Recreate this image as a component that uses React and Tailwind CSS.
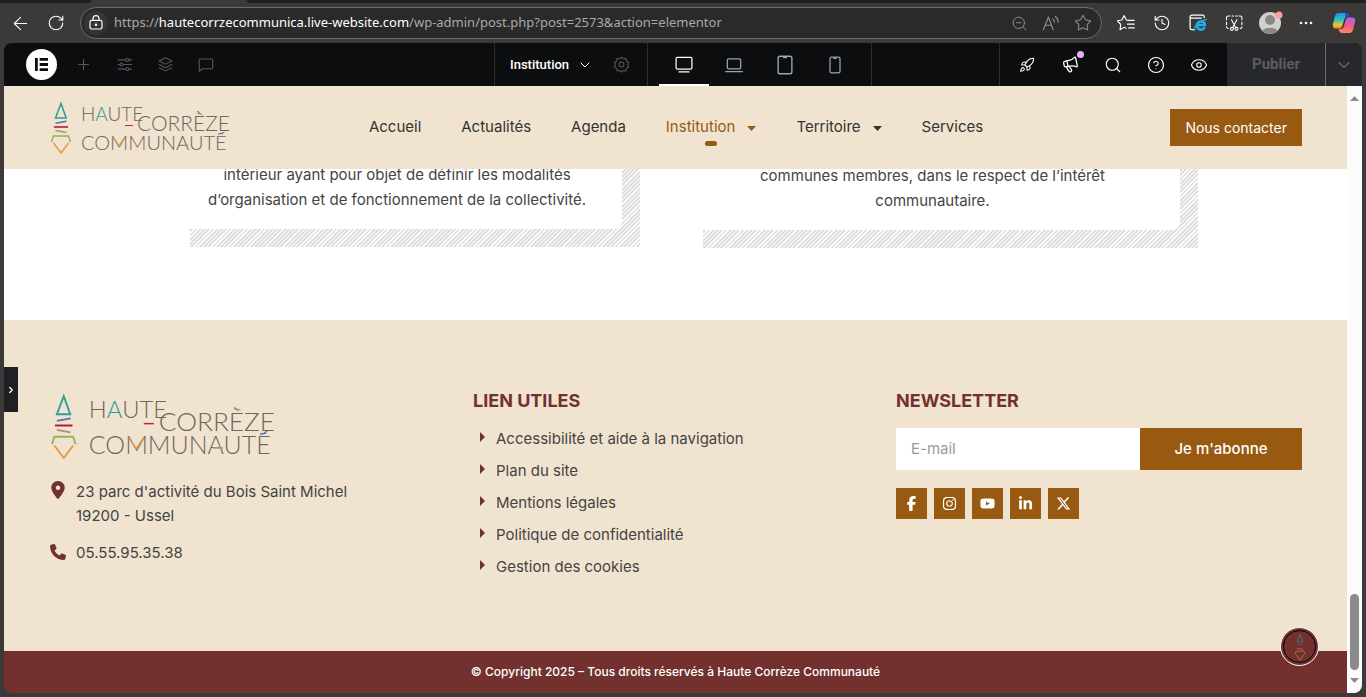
import React from "react";
import { ArrowLeft, RotateCw, ZoomOut, Star, Plus, ChevronDown, Rocket, Search, Eye, CircleQuestionMark, ChevronRight, History, Megaphone } from "lucide-react";
import { FaFacebookF, FaInstagram, FaYoutube, FaLinkedinIn, FaPhone, FaLocationDot, FaXTwitter } from "react-icons/fa6";

const site = "font-['Inter','Liberation_Sans',sans-serif]";

function Svg({ children, size = 18, className = "", ...rest }) {
  return (
    <svg width={size} height={size} viewBox="0 0 24 24" fill="none" stroke="currentColor" strokeWidth="1.5" strokeLinecap="round" strokeLinejoin="round" className={className} aria-hidden="true" {...rest}>
      {children}
    </svg>
  );
}

function Totem() {
  return (
    <g fill="none" strokeWidth="1.5">
      <path d="M11 2.500L16.200 17H5.500Z" stroke="#2f9c95" />
      <path d="M5.500 22.300L16.500 20.300" stroke="#4f72b8" />
      <path d="M4 26H18" stroke="#b5121b" />
      <path d="M5.500 29.500L16.500 31.500" stroke="#b98c7d" />
      <path d="M1.500 41L3.500 35H18.500L20.500 41" stroke="#93b552" />
      <path d="M3.500 42L11 52L18.500 42" stroke="#e39a4a" />
    </g>
  );
}

function Logo({ className }) {
  return (
    <svg viewBox="0 0 180 54" className={className} role="img" aria-label="Haute Corrèze Communauté">
      <Totem />
      <g fill="#6f675e" fontFamily="Lato, sans-serif" fontWeight="300">
        <text x="31" y="20" fontSize="19">H<tspan fill="#2f9c95">A</tspan>UTE</text>
        <text x="87" y="30" fontSize="21">CORRÈZE</text>
        <text x="31" y="49" fontSize="20">COMMUNAUTÉ</text>
      </g>
      <g fill="none" strokeWidth="1.200">
        <path d="M75 24.500H83" stroke="#c0272d" />
        <path d="M62.800 35.500L69 44.500L75 35.500" stroke="#e39a4a" />
        <path d="M130.500 44H138.500" stroke="#93b552" />
        <path d="M147 12.500L152.500 13.500" stroke="#b98c7d" />
        <path d="M168 33L173 32" stroke="#4f72b8" />
      </g>
    </svg>
  );
}

function BrowserBar() {
  const ico = "flex size-7 items-center justify-center";
  return (
    <header className="bg-[#3b3a39] text-white">
      <div className="flex h-[3px]">
        <div className="w-[91px] rounded-br bg-[#202020]" />
        <div className="w-[156px]" />
        <div className="flex-1 rounded-bl bg-[#202020]" />
      </div>
      <div className="flex h-10 items-center pr-2 pl-1.5">
        <button className={ico} aria-label="Retour"><ArrowLeft size={21} strokeWidth={1.3} /></button>
        <button className={ico + " ml-2"} aria-label="Actualiser"><RotateCw size={18} strokeWidth={1.5} /></button>
        <div className="ml-2.5 flex h-8 flex-1 items-center rounded-full border border-[#6b6b6b] bg-[#2a2a2a] pr-1 pl-[3px]">
          <button className="flex size-6 items-center justify-center rounded-full bg-[#353535]" aria-label="Informations sur le site">
            <Svg size={16} strokeWidth="1.800"><rect x="3" y="8" width="18" height="13" rx="2.500" /><path d="M7.500 8V5.500a4.500 4.500 0 0 1 9 0V8" /><circle cx="12" cy="14.500" r="1" fill="currentColor" /></Svg>
          </button>
          <div role="textbox" aria-label="Adresse" className="ml-1.5 flex-1 truncate font-['Noto_Sans',sans-serif] text-[13px] text-[#a9a9a9]">
            https://<span className="text-white">hautecorrzecommunica.live-website.com</span>/wp-admin/post.php?post=2573&amp;action=elementor
          </div>
          <div className="flex items-center gap-1 text-[#8f8f8f]">
            <button className={ico} aria-label="Zoom arrière"><ZoomOut size={17} strokeWidth={1.4} /></button>
            <button className={ico} aria-label="Lecture à voix haute">
              <Svg size={18}><path d="M2 21L8.500 4L15 21M4.500 15H12.500M14.500 6.500q2 1.500 2 4.500M17.500 3q4 3 4 8" /></Svg>
            </button>
            <button className={ico} aria-label="Ajouter aux favoris"><Star size={18} strokeWidth={1.4} /></button>
          </div>
        </div>
        <div className="ml-2.5 flex items-center gap-2">
          <button className={ico} aria-label="Favoris">
            <Svg size={18}><path d="M15 8.500L12.500 8L9.500 2L6.500 8L0.500 9L5 14L4 21L9.500 17.500L12 19M15.500 8.500H23M14 13.500H23M15.500 18.500H23" /></Svg>
          </button>
          <button className={ico} aria-label="Historique"><History size={18} strokeWidth={1.5} /></button>
          <button className={ico} aria-label="Mode Internet Explorer">
            <Svg size={20}>
              <path d="M8 20H4.500a2 2 0 0 1-2-2V4.500a2 2 0 0 1 2-2h13a2 2 0 0 1 2 2v1M3 6H16" />
              <path d="M10.500 14.500H20.500a5 5 0 1 0-1 3.500" stroke="#1fb0ea" strokeWidth="3" />
              <path d="M8 21c-2-3 5-12 14-13" stroke="#1fb0ea" strokeWidth="1.500" />
            </Svg>
          </button>
          <button className={ico} aria-label="Capture d'écran">
            <Svg size={20} strokeWidth="1.300">
              <path d="M3 8V5.500a2 2 0 0 1 2-2H7M9.500 3.500h2M14 3.500h2M18 3.500h1.500a2 2 0 0 1 2 2V8M21.500 11v3M3 11v3M3 16.500a2 2 0 0 0 2 2M21.500 16.500a2 2 0 0 1-2 2" />
              <path d="M9 8L14 17.500M15.500 8L10.500 17.500" /><circle cx="9.500" cy="19" r="1.800" /><circle cx="15" cy="19" r="1.800" />
            </Svg>
          </button>
          <button className={ico} aria-label="Profil">
            <svg width="26" height="26" viewBox="0 0 26 26" aria-hidden="true">
              <circle cx="13" cy="13" r="11" fill="#d2d0ce" /><circle cx="13" cy="10" r="5" fill="#8a8886" />
              <path d="M5.500 21a8 5 0 0 1 15 0a11 11 0 0 1-15 0Z" fill="#8a8886" />
              <circle cx="22" cy="5" r="3.500" fill="#f7a19b" />
            </svg>
          </button>
          <button className={ico} aria-label="Paramètres et plus">
            <svg width="14" height="4" viewBox="0 0 14 4" fill="currentColor" aria-hidden="true"><circle cx="2" cy="2" r="1.300" /><circle cx="7" cy="2" r="1.300" /><circle cx="12" cy="2" r="1.300" /></svg>
          </button>
          <button className={ico + " ml-0.5"} aria-label="Copilot">
            <svg width="24" height="22" viewBox="0 0 24 22" aria-hidden="true">
              <defs>
                <linearGradient id="cpa" x1="0" y1="0" x2="0" y2="1"><stop offset="0" stopColor="#1d8ff0" /><stop offset=".45" stopColor="#2fc3c0" /><stop offset=".75" stopColor="#e8c92c" /><stop offset="1" stopColor="#f5843a" /></linearGradient>
                <linearGradient id="cpb" x1="0" y1="0" x2="0" y2="1"><stop offset="0" stopColor="#b065e8" /><stop offset=".5" stopColor="#f0568c" /><stop offset="1" stopColor="#fb8a52" /></linearGradient>
              </defs>
              <path d="M6 1h8q2.500 0 3 2.500L17.500 5H15q-2 0-2.600 2L10 14.500q-.6 2-3 2H4Q0 16.500 1 12L3 4Q3.800 1 6 1Z" fill="url(#cpa)" />
              <path d="M18 21H10q-2.500 0-3-2.500L6.500 17H9q2 0 2.600-2L14 7.500q.6-2 3-2h3Q24 5.500 23 10L21 18Q20.200 21 18 21Z" fill="url(#cpb)" />
              <path d="M13.500 1Q16.500 1 17 3.500L17.500 5H15q-1.500 0-2 1.500Z" fill="#2848c8" />
            </svg>
          </button>
        </div>
      </div>
    </header>
  );
}

function EditorBar() {
  const tool = "flex size-7 items-center justify-center";
  return (
    <div className={"flex h-[43px] shrink-0 overflow-hidden rounded-t-lg bg-[#0c0d0e] text-white " + site}>
      <div className="flex flex-1 items-center gap-3 pl-[22px]">
        <button className="flex size-[31px] items-center justify-center rounded-full bg-white" aria-label="Elementor">
          <svg width="13" height="13" viewBox="0 0 14 14" fill="#0c0d0e" aria-hidden="true"><path d="M0 0h3v14H0zM5 0h9v3H5zM5 5.500h9v3H5zM5 11h9v3H5z" /></svg>
        </button>
        <div className="flex gap-[13px] text-[#55585c]">
          <button className={tool} aria-label="Ajouter un élément"><Plus size={17} strokeWidth={1.5} /></button>
          <button className={tool} aria-label="Réglages du site"><Svg size={17}><path d="M3 5.500h11M18.500 5.500H22M3 12h2.500M10 12h12M3 18.500h11M18.500 18.500H22" /><circle cx="16.200" cy="5.500" r="2.200" /><circle cx="7.800" cy="12" r="2.200" /><circle cx="16.200" cy="18.500" r="2.200" /></Svg></button>
          <button className={tool} aria-label="Structure"><Svg size={17}><path d="M12 2.500L21 7L12 11.500L3 7ZM3 12L12 16.500L21 12M3 16.500L12 21L21 16.500" /></Svg></button>
          <button className={tool} aria-label="Notes"><Svg size={18}><path d="M3 20.500V6a2 2 0 0 1 2-2h14a2 2 0 0 1 2 2v9a2 2 0 0 1-2 2H7Z" /></Svg></button>
        </div>
      </div>
      <div className="flex w-[154px] items-center justify-between border-x border-[#2b2d30] pr-3 pl-[15px]">
        <button className="flex items-center gap-2 font-['Roboto',sans-serif] text-[13px] font-medium">Institution <ChevronDown size={16} strokeWidth={1.5} /></button>
        <button className={tool + " text-[#55585c]"} aria-label="Réglages de la page">
          <Svg size={17}><circle cx="12" cy="12" r="3.500" /><path d="M12 1.800L14.800 4L18.300 3.600L19 7.200L22 9.200L20.600 12.500L22 15.800L18.800 17.500L18 21L14.500 20.600L12 22.800L9.500 20.600L6 21L5.200 17.500L2 15.800L3.400 12.500L2 9.200L5 7.200L5.700 3.600L9.200 4Z" /></Svg>
        </button>
      </div>
      <div className="flex w-[224px] border-r border-[#2b2d30] pl-[11px] text-[#9da5ae]">
        <button className="flex w-[50px] items-center justify-center border-b-2 border-white text-white" aria-label="Ordinateur"><Svg size={20}><rect x="2.500" y="4" width="19" height="14" rx="1.500" /><path d="M6 21.500h12" /></Svg></button>
        <button className="flex w-[50px] items-center justify-center" aria-label="Portable"><Svg size={20}><rect x="4" y="4.500" width="16" height="12" rx="1.500" /><path d="M2 20h20" /></Svg></button>
        <button className="flex w-[51px] items-center justify-center" aria-label="Tablette"><Svg size={22}><rect x="4.500" y="2.500" width="15" height="19" rx="2" /><path d="M10.500 4h3" /></Svg></button>
        <button className="flex w-[50px] items-center justify-center" aria-label="Mobile"><Svg size={20}><rect x="6" y="2.500" width="12" height="19" rx="2" /><path d="M10.500 4h3" /></Svg></button>
      </div>
      <div className="w-[127px]" />
      <div className="flex w-[228px] items-center gap-[15px] border-l border-[#2b2d30] pl-[13px]">
        <button className={tool} aria-label="Nouveautés"><Rocket size={16} strokeWidth={1.6} /></button>
        <button className={tool + " relative"} aria-label="Annonces">
          <Megaphone size={17} strokeWidth={1.8} className="-rotate-12" />
          <span className="absolute top-0 right-0 size-[7px] rounded-full bg-[#f0abfc]" />
        </button>
        <button className={tool} aria-label="Rechercher"><Search size={18} strokeWidth={1.5} /></button>
        <button className={tool} aria-label="Aide"><CircleQuestionMark size={18} strokeWidth={1.6} /></button>
        <button className={tool} aria-label="Aperçu"><Eye size={18} strokeWidth={1.5} /></button>
      </div>
      <button className="w-[98px] bg-[#26282b] font-['Roboto',sans-serif] text-[15px] font-bold text-[#5b5d60]">Publier</button>
      <button className="flex w-[37px] items-center justify-center border-l border-[#6a6c6f] bg-[#26282b] text-[#6a6c6f]" aria-label="Options de publication"><ChevronDown size={20} strokeWidth={1.3} /></button>
    </div>
  );
}

const nav = [["Accueil"], ["Actualités"], ["Agenda"], ["Institution", true, true], ["Territoire", true], ["Services"]];

function SiteHeader() {
  return (
    <header className="grid h-[83px] shrink-0 grid-cols-[1fr_auto_1fr] items-center bg-[#f0e3cf] pr-[45px] pl-[46px]">
      <a href="#accueil"><Logo className="w-[180px]" /></a>
      <nav className="flex gap-10 pb-0.5 text-[15px] leading-5 text-[#333]">
        {nav.map(([label, sub, active]) => (
          <a key={label} href={"#" + label} className={active ? "relative flex items-center gap-3 text-[#985a10]" : "flex items-center gap-3"}>
            {label}
            {sub && <svg width="9" height="5" viewBox="0 0 9 5" fill="currentColor" className="mt-1" aria-hidden="true"><path d="M0 0h9L4.500 5Z" /></svg>}
            {active && <span className="absolute top-6 left-1/2 h-[5px] w-3 -translate-x-1/2 rounded-sm bg-[#985a10]" />}
          </a>
        ))}
      </nav>
      <a href="#contact" className="justify-self-end bg-[#985a10] px-[15px] py-2 text-[14px] leading-[21px] text-white">Nous contacter</a>
    </header>
  );
}

const hatch = "bg-[repeating-linear-gradient(135deg,#e0e0e0_0px,#e0e0e0_2px,#ffffff_2px,#ffffff_3px)]";

function Cards() {
  return (
    <main className="flex h-[151px] shrink-0 items-start justify-center gap-[63px] overflow-hidden bg-white pl-[37px] text-center text-[15px] leading-[25px] text-[#444]">
      <article className={"-mt-[7px] w-[450px] pr-[18px] pb-[18px] " + hatch}>
        <p className="h-[67px] rounded-br-lg bg-white pr-[18px]">intérieur ayant pour objet de définir les modalités<br />d’organisation et de fonctionnement de la collectivité.</p>
      </article>
      <article className={"-mt-1.5 w-[495px] pr-[18px] pb-[18px] " + hatch}>
        <p className="h-[67px] rounded-br-lg bg-white pr-[18px]">communes membres, dans le respect de l’intérêt<br />communautaire.</p>
      </article>
    </main>
  );
}

const links = ["Accessibilité et aide à la navigation", "Plan du site", "Mentions légales", "Politique de confidentialité", "Gestion des cookies"];
const socials = [["Facebook", FaFacebookF], ["Instagram", FaInstagram], ["YouTube", FaYoutube], ["LinkedIn", FaLinkedinIn], ["X", FaXTwitter]];

function Footer() {
  return (
    <footer className="flex flex-1 flex-col text-[15px] text-[#444]">
      <div className="grid flex-1 grid-cols-3 gap-[17px] bg-[#f0e3cf] pt-[70px] pr-[45px] pb-8 pl-[46px]">
        <section>
          <Logo className="mt-[3px] w-[225px]" />
          <address className="mt-[19px] flex flex-col gap-[13px] leading-6 not-italic">
            <p className="flex gap-2.5"><FaLocationDot className="mt-px w-4 shrink-0 text-[18px] text-[#72312f]" /><span>23 parc d'activité du Bois Saint Michel<br />19200 - Ussel</span></p>
            <p className="flex gap-2.5"><FaPhone className="mt-0.5 w-4 shrink-0 text-[18px] text-[#72312f]" /><a href="tel:0555953538">05.55.95.35.38</a></p>
          </address>
        </section>
        <section>
          <h2 className="text-[18px] leading-[22px] font-bold text-[#72312f]">LIEN UTILES</h2>
          <ul className="mt-[11px] pl-1.5">
            {links.map((l) => (
              <li key={l} className="flex h-8 items-center gap-[11px]">
                <svg width="6" height="14" viewBox="0 0 6 14" fill="#72312f" aria-hidden="true"><path d="M1 0L6 5L1 10Z" /></svg>
                <a href="#lien">{l}</a>
              </li>
            ))}
          </ul>
        </section>
        <section>
          <h2 className="text-[18px] leading-[22px] font-bold text-[#72312f]">NEWSLETTER</h2>
          <form className="mt-4 flex h-[42px]">
            <input type="email" aria-label="E-mail" placeholder="E-mail" className="min-w-0 flex-1 bg-white px-[15px] placeholder:text-[#999]" />
            <button type="button" className="w-[162px] bg-[#985a10] text-[15px] font-medium text-white">Je m'abonne</button>
          </form>
          <div className="mt-[18px] flex gap-[7px]">
            {socials.map(([name, Icon]) => (
              <a key={name} href="#social" aria-label={name} className="flex size-[31px] items-center justify-center bg-[#985a10] text-[15px] text-white"><Icon /></a>
            ))}
          </div>
        </section>
      </div>
      <p className="h-[42px] bg-[#72312f] text-center text-[12px] leading-[42px] font-medium text-white">© Copyright 2025 – Tous droits réservés à Haute Corrèze Communauté</p>
    </footer>
  );
}

export default function App() {
  return (
    <div className={"flex min-h-screen flex-col bg-[#3b3a39] " + site}>
      <BrowserBar />
      <div className="mx-1 mb-1 flex flex-1 flex-col">
        <EditorBar />
        <div className="relative flex flex-1 overflow-hidden rounded-b-lg">
          <div className="flex flex-1 flex-col">
            <SiteHeader />
            <Cards />
            <Footer />
          </div>
          <div className="flex w-[15px] flex-col items-center bg-[#fcfcfc] pt-2.5 pb-2.5" aria-hidden="true">
            <svg width="9" height="5" viewBox="0 0 9 5" fill="#8b8b8b"><path d="M0 5h9L4.500 0Z" /></svg>
            <div className="mt-auto mb-2 h-[76px] w-[9px] rounded-full bg-[#8b8b8b]" />
            <svg width="9" height="5" viewBox="0 0 9 5" fill="#8b8b8b"><path d="M0 0h9L4.500 5Z" /></svg>
          </div>
          <button className="absolute top-[281px] left-0 flex h-[45px] w-3.5 items-center justify-center bg-[#1f2124] text-white" aria-label="Ouvrir le panneau"><ChevronRight size={10} strokeWidth={3} /></button>
          <button className="absolute right-[43px] bottom-[27px] flex size-[39px] items-center justify-center rounded-full border border-white bg-[#72312f] p-0.5" aria-label="Accessibilité">
            <span className="flex size-full items-center justify-center rounded-full border border-black">
              <svg width="12" height="28" viewBox="0 0 22 54" opacity="0.800" aria-hidden="true"><Totem /></svg>
            </span>
          </button>
        </div>
      </div>
    </div>
  );
}
